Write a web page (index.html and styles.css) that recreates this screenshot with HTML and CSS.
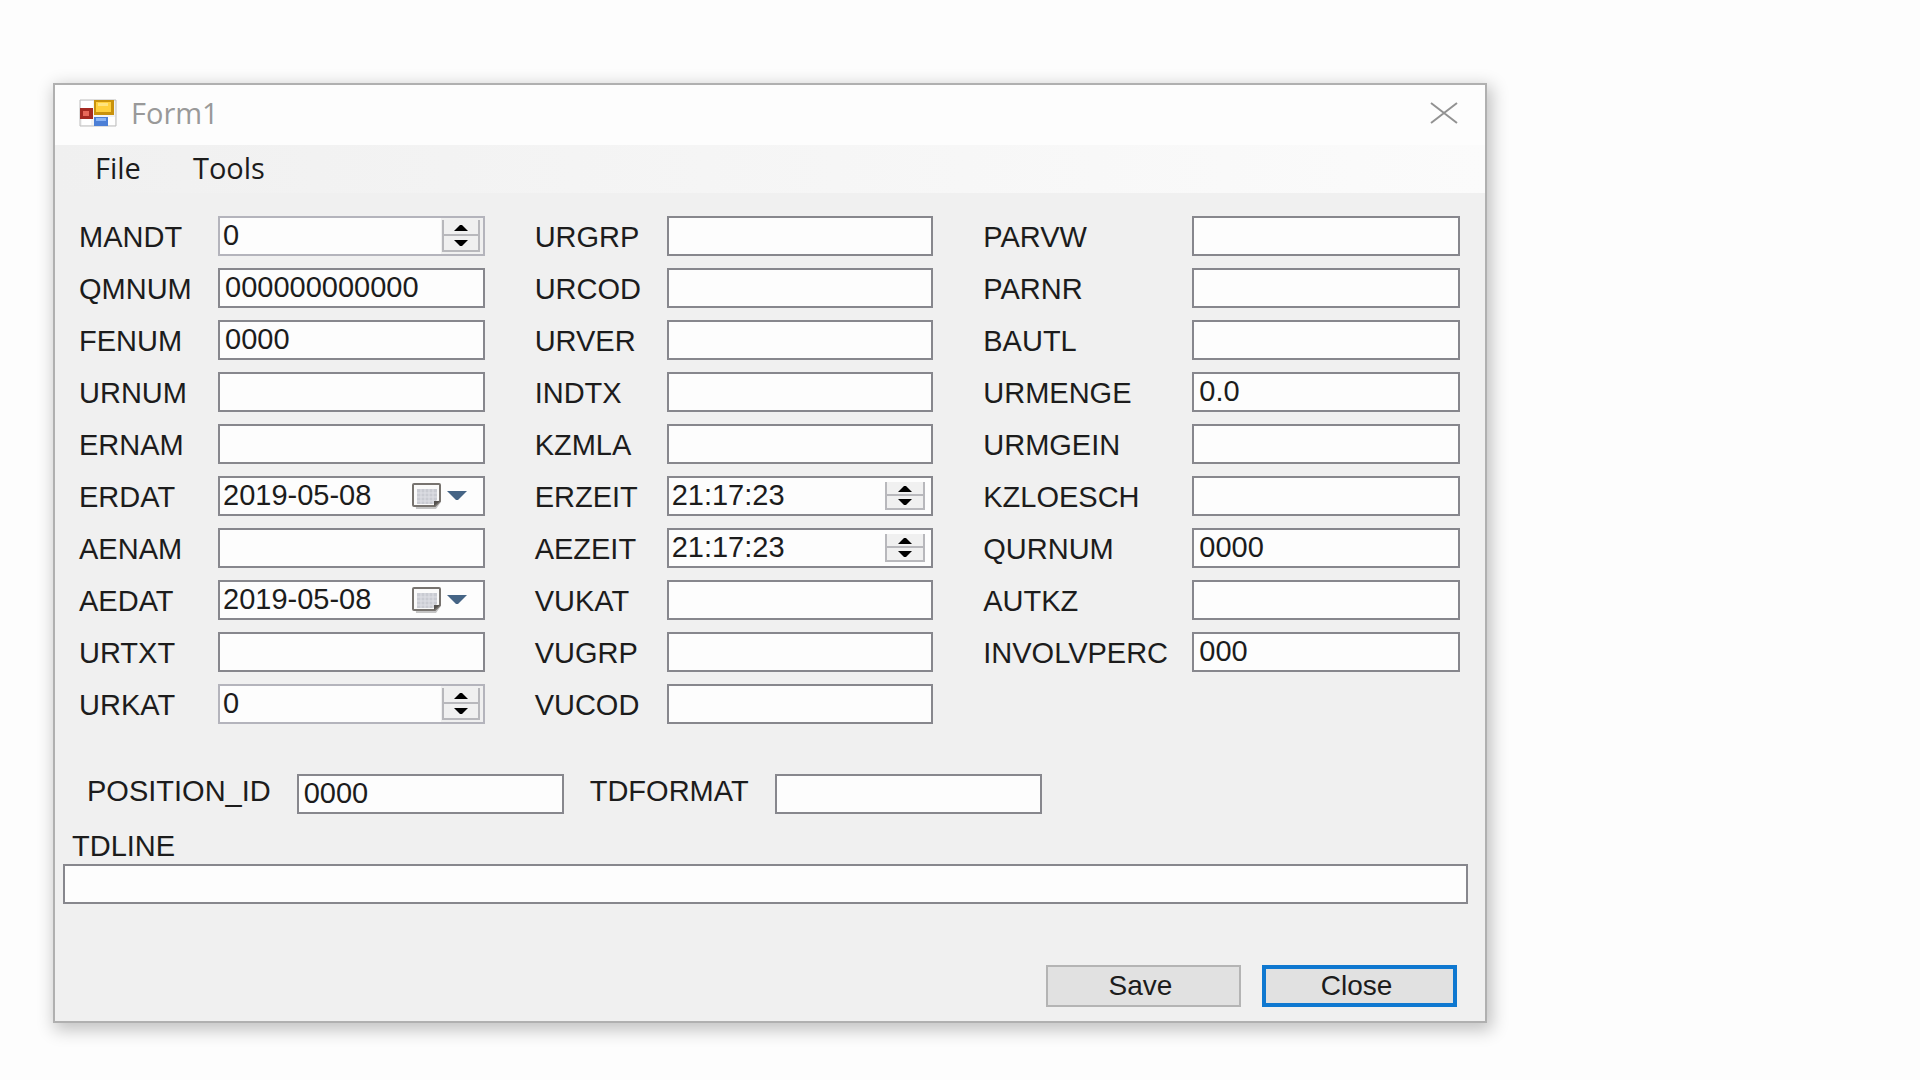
FILE: index.html
```html
<!DOCTYPE html>
<html lang="en">
<head>
<meta charset="utf-8">
<title>Form1</title>
<link rel="stylesheet" href="styles.css">
</head>
<body>
<svg class="symbols" aria-hidden="true">
  <symbol id="up" viewBox="0 0 14 7"><path d="M0 7 6 1h2l6 6z"/></symbol>
  <symbol id="down" viewBox="0 0 14 7"><path d="M0 0 6 6h2l6-6z"/></symbol>
  <symbol id="calendar" viewBox="0 0 32 28">
    <path d="M3 5h27v15l-5 7H5z" fill="#c4c4c4"/>
    <path d="M3 2h25q1 0 1 1v16l-5 5H3q-1 0-1-1V3q0-1 1-1z" fill="#fafafa" stroke="#77736f" stroke-width="2"/>
    <path d="M6 7h20v11l-4 4H6z" fill="#c9cbd2"/>
    <path d="M6 11h20M6 15h20M6 19h18M10 7v15M14 7v15M18 7v15M22 7v15" stroke="#dfe0e6"/>
    <path d="M23 24v-5h6z" fill="#55524f"/>
  </symbol>
  <symbol id="drop" viewBox="0 0 20 10"><path d="M0 0h20l-9 9H9z" fill="#456485"/></symbol>
</svg>
<main class="window">
  <header class="titlebar">
    <svg class="app-icon" viewBox="0 0 38 28" aria-hidden="true">
      <path d="M1 1h36v26H1z" fill="#f3f3f3" stroke="#bdbdbd"/>
      <path d="M2 2h12v7H2zM3 20h9v6H3zM29 18h7v8h-7z" fill="#fff"/>
      <path d="M1 9h13v11H1z" fill="#a52a22"/><path d="M4 12h6v5H4z" fill="#e8695a"/>
      <path d="M15 1h20v15H15z" fill="#c9920c"/><path d="M17 3h15v10H17z" fill="#ffd03c"/><path d="M19 4h10v3H19z" fill="#ffe47e"/>
      <path d="M15 18h14v9H15z" fill="#4c7fd6"/><path d="M17 19h10v3H17z" fill="#8ab4f5"/>
    </svg>
    <h1 class="title">Form1</h1>
    <button class="dismiss" type="button" aria-label="Close window">
      <svg viewBox="0 0 28 22"><path d="M1 1 27 21M27 1 1 21" fill="none" stroke="#929292" stroke-width="2"/></svg>
    </button>
  </header>
  <nav class="menubar">
    <button class="menu" type="button">File</button>
    <button class="menu" type="button">Tools</button>
  </nav>
  <form class="form">
    <div class="columns">
      <div class="group group-a">
        <label for="mandt">MANDT</label>
        <div class="field pale"><input id="mandt" value="0"><span class="spin"><button type="button" aria-label="Increase"><svg><use href="#up"/></svg></button><button type="button" aria-label="Decrease"><svg><use href="#down"/></svg></button></span></div>
        <label for="qmnum">QMNUM</label><input class="box" id="qmnum" value="000000000000">
        <label for="fenum">FENUM</label><input class="box" id="fenum" value="0000">
        <label for="urnum">URNUM</label><input class="box" id="urnum">
        <label for="ernam">ERNAM</label><input class="box" id="ernam">
        <label for="erdat">ERDAT</label>
        <div class="field"><input id="erdat" value="2019-05-08"><button class="pick" type="button" aria-label="Pick date"><svg class="cal"><use href="#calendar"/></svg><svg class="arrow"><use href="#drop"/></svg></button></div>
        <label for="aenam">AENAM</label><input class="box" id="aenam">
        <label for="aedat">AEDAT</label>
        <div class="field"><input id="aedat" value="2019-05-08"><button class="pick" type="button" aria-label="Pick date"><svg class="cal"><use href="#calendar"/></svg><svg class="arrow"><use href="#drop"/></svg></button></div>
        <label for="urtxt">URTXT</label><input class="box" id="urtxt">
        <label for="urkat">URKAT</label>
        <div class="field pale"><input id="urkat" value="0"><span class="spin"><button type="button" aria-label="Increase"><svg><use href="#up"/></svg></button><button type="button" aria-label="Decrease"><svg><use href="#down"/></svg></button></span></div>
      </div>
      <div class="group group-b">
        <label for="urgrp">URGRP</label><input class="box" id="urgrp">
        <label for="urcod">URCOD</label><input class="box" id="urcod">
        <label for="urver">URVER</label><input class="box" id="urver">
        <label for="indtx">INDTX</label><input class="box" id="indtx">
        <label for="kzmla">KZMLA</label><input class="box" id="kzmla">
        <label for="erzeit">ERZEIT</label>
        <div class="field"><input id="erzeit" value="21:17:23"><span class="spin inset"><button type="button" aria-label="Increase"><svg><use href="#up"/></svg></button><button type="button" aria-label="Decrease"><svg><use href="#down"/></svg></button></span></div>
        <label for="aezeit">AEZEIT</label>
        <div class="field"><input id="aezeit" value="21:17:23"><span class="spin inset"><button type="button" aria-label="Increase"><svg><use href="#up"/></svg></button><button type="button" aria-label="Decrease"><svg><use href="#down"/></svg></button></span></div>
        <label for="vukat">VUKAT</label><input class="box" id="vukat">
        <label for="vugrp">VUGRP</label><input class="box" id="vugrp">
        <label for="vucod">VUCOD</label><input class="box" id="vucod">
      </div>
      <div class="group group-c">
        <label for="parvw">PARVW</label><input class="box" id="parvw">
        <label for="parnr">PARNR</label><input class="box" id="parnr">
        <label for="bautl">BAUTL</label><input class="box" id="bautl">
        <label for="urmenge">URMENGE</label><input class="box" id="urmenge" value="0.0">
        <label for="urmgein">URMGEIN</label><input class="box" id="urmgein">
        <label for="kzloesch">KZLOESCH</label><input class="box" id="kzloesch">
        <label for="qurnum">QURNUM</label><input class="box" id="qurnum" value="0000">
        <label for="autkz">AUTKZ</label><input class="box" id="autkz">
        <label for="involvperc">INVOLVPERC</label><input class="box" id="involvperc" value="000">
      </div>
    </div>
    <div class="position">
      <label for="position">POSITION_ID</label><input class="box" id="position" value="0000">
      <label for="tdformat">TDFORMAT</label><input class="box" id="tdformat">
    </div>
    <div class="line">
      <label for="tdline">TDLINE</label>
      <input class="box" id="tdline">
    </div>
    <div class="actions">
      <button class="action" type="button">Save</button>
      <button class="action default" type="button">Close</button>
    </div>
  </form>
</main>
</body>
</html>
```

FILE: styles.css
```css
* {
  box-sizing: border-box;
}

body {
  margin: 0;
  padding: 83px 433px 56px 53px;
  background: #fdfdfd;
  color: #1c1c1c;
  font-family: "Liberation Sans", Arial, sans-serif;
  font-size: 29px;
  line-height: 32px;
}

input,
button {
  margin: 0;
  padding: 0;
  border: 0;
  border-radius: 0;
  background: none;
  color: inherit;
  font: inherit;
}

input {
  min-width: 0;
  outline: 0;
}

svg {
  display: block;
}

.symbols {
  display: none;
}

.window {
  border: 2px solid #b0b0b0;
  background: #f0f0f0;
  box-shadow: 3px 5px 16px 2px rgba(0, 0, 0, 0.24);
}

.titlebar {
  display: flex;
  align-items: center;
  height: 60px;
  padding: 0 27px 4px 24px;
  background: #fdfdfd;
}

.app-icon {
  width: 38px;
  height: 28px;
}

.title {
  margin: 0 auto 0 14px;
  color: #999;
  font-family: "Open Sans", "Noto Sans", sans-serif;
  font-size: 29px;
  font-weight: 400;
}

.dismiss svg {
  width: 28px;
  height: 22px;
}

.menubar {
  display: flex;
  gap: 52px;
  height: 48px;
  padding: 0 40px 2px;
  background: linear-gradient(90deg, #f0f0f0, #fbfbfb);
  font-family: "Open Sans", "Noto Sans", sans-serif;
  font-weight: 500;
}

.form {
  padding: 23px 17px 14px 8px;
}

.columns {
  display: grid;
  grid-template-columns: 405fr 398fr 476fr;
  align-items: start;
  gap: 50px;
  padding: 0 8px 0 16px;
}

.group {
  display: grid;
  grid-auto-rows: 40px;
  align-items: center;
  row-gap: 12px;
}

.group label {
  padding-top: 1px;
}

.group-a {
  grid-template-columns: 139px minmax(0, 1fr);
}

.group-b {
  grid-template-columns: 132px minmax(0, 1fr);
}

.group-c {
  grid-template-columns: 209px minmax(0, 1fr);
}

.box,
.field {
  width: 100%;
  height: 40px;
  border: 2px solid #87878d;
  background: #fdfdfd;
}

.box {
  padding: 0 5px 2px;
}

.field {
  display: flex;
  align-items: center;
}

.field input {
  flex: 1;
  padding: 0 3px 3px;
}

.pale {
  border-color: #b4b4bc;
}

.spin {
  display: flex;
  flex-direction: column;
  width: 42px;
  height: 36px;
  padding: 2px 3px 2px 1px;
  background: #f0f0f0;
}

.spin button {
  display: grid;
  flex: 1;
  place-items: center;
  border: 2px solid #b8b8bc;
  border-top: 0;
  background: #f0f0f0;
}

.spin svg {
  width: 14px;
  height: 7px;
}

.inset {
  width: 40px;
  height: 28px;
  margin-right: 6px;
  padding: 0;
}

.pick {
  display: flex;
  align-items: center;
  gap: 4px;
  margin-right: 16px;
}

.cal {
  width: 32px;
  height: 28px;
}

.arrow {
  width: 20px;
  height: 10px;
}

.position {
  display: flex;
  gap: 26px;
  margin-top: 50px;
  padding-left: 24px;
}

.position .box {
  width: 267px;
}

.position label {
  padding-top: 1px;
}

.line {
  display: grid;
  gap: 2px;
  margin-top: 15px;
}

.line label {
  padding: 1px 9px 0;
}

.actions {
  display: flex;
  justify-content: flex-end;
  gap: 21px;
  margin-top: 61px;
  padding-right: 11px;
}

.action {
  width: 195px;
  height: 42px;
  padding-right: 6px;
  border: 2px solid #b4b4b4;
  background: #e1e1e1;
  font-size: 28px;
}

.default {
  border: 4px solid #0f78d0;
}
```
